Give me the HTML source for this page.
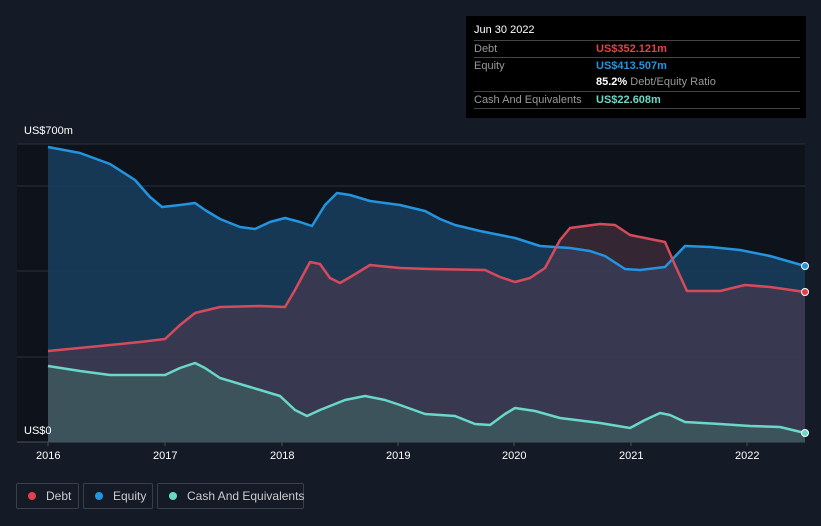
<!DOCTYPE html><html><head><style>
html,body{margin:0;width:821px;height:526px;background:#151b26;font-family:"Liberation Sans",sans-serif;overflow:hidden;position:relative}
.t{position:absolute;color:#fff;font-size:11px}
.tip{position:absolute;left:466px;top:16px;width:340px;height:102px;background:#000}
.row{position:absolute;left:8px;width:326px;border-top:1px solid #444;height:17px;font-size:11px;color:#999;line-height:17px}
.leg{position:absolute;top:483px;height:26px;border:1px solid #3a404a;border-radius:2px;color:#ccc;font-size:12px;line-height:24px;box-sizing:border-box;white-space:nowrap}
.leg i{display:inline-block;width:8px;height:8px;border-radius:50%;margin:0 10px 0 11px}
</style></head><body>
<svg width="821" height="526" style="position:absolute;left:0;top:0">
<rect x="17" y="144" width="788" height="298" fill="#0e131b"/>
<g stroke="#2a313c" stroke-width="1"><line x1="17" y1="144" x2="805" y2="144"/><line x1="17" y1="186" x2="805" y2="186"/><line x1="17" y1="271" x2="805" y2="271"/><line x1="17" y1="357" x2="805" y2="357"/><line x1="17" y1="442" x2="805" y2="442" stroke="#4a505a"/></g>
<defs>
<path id="eq" d="M48,147 L80,153 L110,164 L135,180 L150,197 L162,207 L180,205 L195,203 L205,210 L220,219 L240,227 L255,229 L270,222 L285,218 L300,222 L312,226 L325,205 L337,193 L350,195 L370,201 L400,205 L425,211 L440,219 L455,225 L480,231 L500,235 L515,238 L540,246 L570,248 L590,251 L605,256 L625,269 L640,270 L665,267 L685,246 L710,247 L740,250 L770,256 L805,266"/>
<path id="de" d="M48,351 L100,346 L140,342 L165,339 L180,325 L195,313 L220,307 L260,306 L285,307 L295,290 L310,262 L320,264 L330,278 L340,283 L352,276 L370,265 L400,268 L430,269 L485,270 L500,277 L515,282 L530,278 L545,268 L560,240 L570,228 L600,224 L615,225 L630,235 L655,240 L665,242 L675,265 L687,291 L720,291 L745,285 L770,287 L805,292"/>
<path id="ca" d="M48,366 L80,371 L110,375 L165,375 L180,368 L195,363 L205,368 L220,378 L250,387 L280,396 L295,410 L307,416 L320,410 L345,400 L365,396 L385,400 L400,405 L425,414 L455,416 L475,424 L490,425 L505,414 L515,408 L535,411 L560,418 L600,423 L630,428 L645,420 L660,413 L670,415 L685,422 L720,424 L750,426 L780,427 L805,433"/>
</defs>
<path d="M48,147 L80,153 L110,164 L135,180 L150,197 L162,207 L180,205 L195,203 L205,210 L220,219 L240,227 L255,229 L270,222 L285,218 L300,222 L312,226 L325,205 L337,193 L350,195 L370,201 L400,205 L425,211 L440,219 L455,225 L480,231 L500,235 L515,238 L540,246 L570,248 L590,251 L605,256 L625,269 L640,270 L665,267 L685,246 L710,247 L740,250 L770,256 L805,266 L805,442 L48,442Z" fill="#17405f" opacity="0.85"/>
<path d="M48,351 L100,346 L140,342 L165,339 L180,325 L195,313 L220,307 L260,306 L285,307 L295,290 L310,262 L320,264 L330,278 L340,283 L352,276 L370,265 L400,268 L430,269 L485,270 L500,277 L515,282 L530,278 L545,268 L560,240 L570,228 L600,224 L615,225 L630,235 L655,240 L665,242 L675,265 L687,291 L720,291 L745,285 L770,287 L805,292 L805,442 L48,442Z" fill="#5a3a4c" opacity="0.5"/>
<path d="M48,366 L80,371 L110,375 L165,375 L180,368 L195,363 L205,368 L220,378 L250,387 L280,396 L295,410 L307,416 L320,410 L345,400 L365,396 L385,400 L400,405 L425,414 L455,416 L475,424 L490,425 L505,414 L515,408 L535,411 L560,418 L600,423 L630,428 L645,420 L660,413 L670,415 L685,422 L720,424 L750,426 L780,427 L805,433 L805,442 L48,442Z" fill="#3d5a5e" opacity="0.8"/>
<g fill="none" stroke-width="2.5" stroke-linejoin="round"><use href="#eq" stroke="#2394df"/><use href="#de" stroke="#d64b5c"/><use href="#ca" stroke="#6ad8c8"/></g>
<circle cx="805" cy="266" r="3.5" fill="#2394df" stroke="#fff" stroke-width="1"/>
<circle cx="805" cy="292" r="3.5" fill="#e0404a" stroke="#fff" stroke-width="1"/>
<circle cx="805" cy="433" r="3.5" fill="#6ad8c8" stroke="#fff" stroke-width="1"/>
<g stroke="#4a505a"><line x1="48" y1="442" x2="48" y2="446"/><line x1="165" y1="442" x2="165" y2="446"/><line x1="282" y1="442" x2="282" y2="446"/><line x1="398" y1="442" x2="398" y2="446"/><line x1="514" y1="442" x2="514" y2="446"/><line x1="631" y1="442" x2="631" y2="446"/><line x1="747" y1="442" x2="747" y2="446"/></g>
</svg>
<div class="t" style="left:24px;top:125px">US$700m</div>
<div class="t" style="left:24px;top:425px">US$0</div>
<div class="t" style="left:36px;top:450px">2016</div><div class="t" style="left:153px;top:450px">2017</div><div class="t" style="left:270px;top:450px">2018</div><div class="t" style="left:386px;top:450px">2019</div><div class="t" style="left:502px;top:450px">2020</div><div class="t" style="left:619px;top:450px">2021</div><div class="t" style="left:735px;top:450px">2022</div>
<div class="tip">
<div style="position:absolute;left:8px;top:8px;color:#fff;font-size:11px">Jun 30 2022</div>
<div class="row" style="top:24px">Debt<span style="position:absolute;left:122px;color:#e5404a;font-weight:bold">US$352.121m</span></div>
<div class="row" style="top:41px">Equity<span style="position:absolute;left:122px;color:#2394df;font-weight:bold">US$413.507m</span></div>
<div class="row" style="top:58px;border-top:none"><span style="position:absolute;left:122px;color:#fff;font-weight:bold">85.2% <span style="color:#999;font-weight:normal">Debt/Equity Ratio</span></span></div>
<div class="row" style="top:75px">Cash And Equivalents<span style="position:absolute;left:122px;color:#6ad8c8;font-weight:bold">US$22.608m</span></div>
<div class="row" style="top:92px;height:0"></div>
</div>
<div class="leg" style="left:16px;width:63px"><i style="background:#e5404a"></i>Debt</div>
<div class="leg" style="left:83px;width:70px"><i style="background:#2394df"></i>Equity</div>
<div class="leg" style="left:157px;width:147px"><i style="background:#6ad8c8"></i>Cash And Equivalents</div>
</body></html>
